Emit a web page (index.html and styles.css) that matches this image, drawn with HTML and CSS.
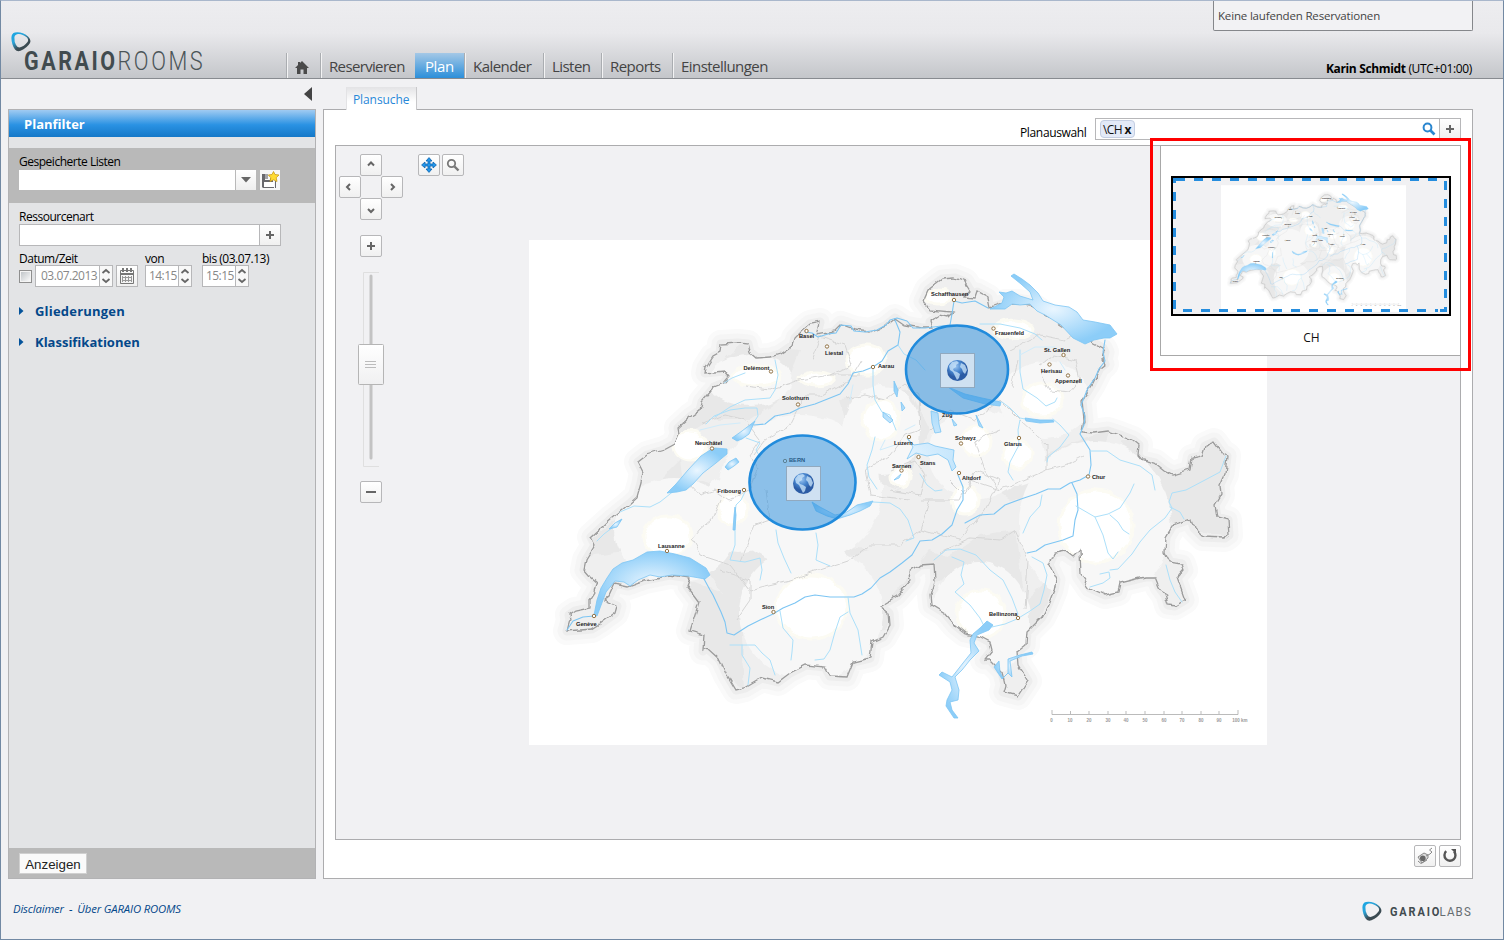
FILE: index.html
```
<!DOCTYPE html>
<html lang="de">
<head>
<meta charset="utf-8">
<title>GARAIO ROOMS – Plan</title>
<link rel="stylesheet" href="styles.css">
</head>
<body>
<div class="page">
  <header class="header">
    <svg class="logo" width="200" height="50" viewBox="10 28 200 50">
      <defs><linearGradient id="ring" x1="0" y1="0" x2="0.75" y2="1"><stop offset="0" stop-color="#18a8e6"/><stop offset=".4" stop-color="#2ba3d8"/><stop offset=".7" stop-color="#3c4d55"/><stop offset="1" stop-color="#39474c"/></linearGradient></defs>
      <path id="ringmark" fill="url(#ring)" fill-rule="evenodd" d="M15 32.500 Q11.500 33 11.400 38 Q11.600 45 15 49.500 Q17 52 20.500 50.800 Q27 48 30 43 Q31.500 40 28 36.500 Q22 31.500 15 32.500Z M18 34 Q22 33.500 27 37.500 Q29 40 27.500 42 Q24 46.500 19.500 47.500 Q17.500 47.500 16 45 Q14.200 42 14.400 37.500 Q14.500 34.500 18 34Z"/>
      <text class="logo-bold" transform="translate(24 70) scale(.86 1)" textLength="106">GARAIO</text>
      <text class="logo-thin" transform="translate(117.500 70) scale(.87 1)" textLength="98">ROOMS</text>
    </svg>
    <nav class="nav">
      <a class="nav-home"><svg width="16" height="15" viewBox="0 0 16 15"><path fill="#4a4a4a" d="M8 1 15 8H13V14H9.500V9.500H6.500V14H3V8H1L4 5V2H6V3Z"/></svg></a>
      <a class="nav-item w95">Reservieren</a>
      <a class="nav-item active">Plan</a>
      <a class="nav-item w79">Kalender</a>
      <a class="nav-item w58">Listen</a>
      <a class="nav-item w71">Reports</a>
      <a class="nav-item">Einstellungen</a>
    </nav>
    <div class="account">
      <div class="running">Keine laufenden Reservationen</div>
      <div class="user"><b>Karin Schmidt</b> <span>(UTC+01:00)</span></div>
    </div>
  </header>
  <main class="main">
    <section class="side">
      <div class="collapse"><svg width="8" height="14" viewBox="0 0 8 14"><path fill="#444" d="M8 0V14L0 7Z"/></svg></div>
      <div class="filter">
        <h2 class="filter-title">Planfilter</h2>
        <div class="saved">
          <label class="lbl saved-lbl">Gespeicherte Listen</label>
          <div class="row">
            <span class="select"></span><span class="drop"><svg width="10" height="6"><path fill="#666" d="M0 0H10L5 5.500Z"/></svg></span>
            <span class="save"><svg width="20" height="20" viewBox="0 0 20 20"><path fill="#68686c" d="M2 4H5V10H10V8L13 10V12H14V18H15V11H16V18H3L2 17Z"/><path fill="#fff" d="M4 12H14V17H4Z"/><path fill="#a4a4a8" d="M5 4H8V9H5Z"/><path fill="#ffdb32" stroke="#c99a19" stroke-width=".8" d="M13.500 1.500 15 4.500 19 5 16.200 7.700 17 11.500 13.500 9.800 10 11.500 10.800 7.700 8.300 5 12 4.500Z"/></svg></span>
          </div>
        </div>
        <div class="fields">
          <label class="lbl res-lbl">Ressourcenart</label>
          <div class="row"><span class="field res"></span><span class="btn plus-join"><svg width="10" height="10"><path fill="#666" d="M4 1H6V4H9V6H6V9H4V6H1V4H4Z"/></svg></span></div>
          <div class="dates">
            <div class="date-col">
              <label class="lbl date-lbl">Datum/Zeit</label>
              <div class="row"><span class="check"></span><span class="field date">03.07.2013</span><span class="spin"><svg width="10" height="18"><path class="chev" d="M1.500 6 5 3 8.500 6M1.500 12 5 15 8.500 12"/></svg></span>
              <span class="btn cal"><svg width="16" height="17" viewBox="0 0 16 17"><path fill="none" stroke="#777" d="M1.500 2.500H14.500V15.500H1.500Z"/><path fill="#777" d="M1 5H15V7H1ZM3 0H5V4H3ZM7 0H9V4H7ZM11 0H13V4H11Z"/><path stroke="#999" fill="none" d="M3 9.500H13M3 12.500H13M3.500 8V14M6.500 8V14M9.500 8V14M12.500 8V14"/></svg></span></div>
            </div>
            <div class="von-col"><label class="lbl date-lbl">von</label>
              <div class="row"><span class="field time">14:15</span><span class="spin"><svg width="10" height="18"><path class="chev" d="M1.500 6 5 3 8.500 6M1.500 12 5 15 8.500 12"/></svg></span></div></div>
            <div><label class="lbl date-lbl">bis (03.07.13)</label>
              <div class="row"><span class="field time">15:15</span><span class="spin"><svg width="10" height="18"><path class="chev" d="M1.500 6 5 3 8.500 6M1.500 12 5 15 8.500 12"/></svg></span></div></div>
          </div>
          <div class="group"><svg width="5" height="8"><path fill="#04539b" d="M0 0 4.500 4 0 8Z"/></svg><span class="g-wide">Gliederungen</span></div>
          <div class="group"><svg width="5" height="8"><path fill="#04539b" d="M0 0 4.500 4 0 8Z"/></svg><span>Klassifikationen</span></div>
        </div>
        <div class="actions"><span class="show">Anzeigen</span></div>
      </div>
    </section>
    <section class="content">
      <div class="tabs"><span class="tab">Plansuche</span></div>
      <div class="panel">
        <div class="search-row">
          <label class="lbl plan-lbl">Planauswahl</label>
          <div class="search"><span class="chip">\CH <b>x</b></span>
            <svg width="14" height="14" viewBox="0 0 14 14"><circle cx="5.500" cy="5.500" r="3.900" fill="none" stroke="#2a86cf" stroke-width="2"/><path d="M8.500 8.500 12.500 12.500" stroke="#2a86cf" stroke-width="2.600"/></svg></div>
          <span class="btn plus-search"><svg width="10" height="10"><path fill="#666" d="M4 1H6V4H9V6H6V9H4V6H1V4H4Z"/></svg></span>
        </div>
        <div class="viewport">
          <div class="controls">
            <div class="pad">
              <span class="btn up"><svg width="10" height="10"><path class="arrow" d="M2 5.500 5 2.500 8 5.500"/></svg></span>
              <span class="btn left"><svg width="10" height="10"><path class="arrow" d="M5 2 2 5 5 8"/></svg></span>
              <span class="btn right"><svg width="10" height="10"><path class="arrow" d="M4 2 7 5 4 8"/></svg></span>
              <span class="btn down"><svg width="10" height="10"><path class="arrow" d="M2 5 5 8 8 5"/></svg></span>
            </div>
            <span class="btn zoom-in"><svg width="10" height="10"><path fill="#666" d="M4 1H6V4H9V6H6V9H4V6H1V4H4Z"/></svg></span>
            <div class="slider"><svg width="28" height="196" viewBox="357 271 28 196"><defs><linearGradient id="knob" x1="0" y1="0" x2="0" y2="1"><stop offset="0" stop-color="#fff"/><stop offset="1" stop-color="#f0f0f1"/></linearGradient></defs><path fill="none" stroke="#dfdfdf" d="M379 272.500H363.500V466.500H379"/><path stroke="#c3c3c3" stroke-width="3" stroke-linecap="round" d="M371 276V458"/><rect x="358.500" y="344.500" width="25" height="40" rx="1" fill="url(#knob)" stroke="#b5b5b5"/><path stroke="#bcbcbc" d="M365 361.500H376M365 364.500H376M365 367.500H376"/></svg></div>
            <span class="btn zoom-out"><svg width="10" height="10"><path fill="#666" d="M0 4H10V6H0Z"/></svg></span>
          </div>
          <div class="tools">
            <span class="btn"><svg width="16" height="16" viewBox="0 0 16 16"><path fill="#2196ea" stroke="#0d63ae" stroke-width=".8" d="M8 .6 11 4H9V7H12V5L15.400 8 12 11V9H9V12H11L8 15.400 5 12H7V9H4V11L.6 8 4 5V7H7V4H5Z"/></svg></span>
            <span class="btn"><svg width="14" height="14" viewBox="0 0 14 14"><circle cx="5.500" cy="5.500" r="3.700" fill="none" stroke="#777" stroke-width="1.800"/><path d="M8.500 8.500 12.500 12.500" stroke="#777" stroke-width="2.400"/></svg></span>
          </div>
          <svg class="map" width="738" height="505" viewBox="529 240 738 505">
            <defs>
              <radialGradient id="lake"><stop offset="0" stop-color="#eaf6ff"/><stop offset="1" stop-color="#8ccdf8"/></radialGradient>
              <radialGradient id="globe" cx=".4" cy=".3"><stop offset="0" stop-color="#9dc7f2"/><stop offset=".6" stop-color="#4583cc"/><stop offset="1" stop-color="#2c5ca5"/></radialGradient>
              <filter id="rough" x="-5%" y="-5%" width="110%" height="110%" color-interpolation-filters="sRGB"><feTurbulence type="fractalNoise" baseFrequency=".12" numOctaves="1" seed="4"/><feDisplacementMap in="SourceGraphic" scale="7" xChannelSelector="R" yChannelSelector="G"/></filter>
              <path id="border" d="M567 631 570 620 569 615 575 611 590 608 590 600 595 592 597 583 590 577 584 570 586 560 595 545 591 537 612 518 628 505 637 497 641 483 643 472 638 462 647 455 664 450 675 444 679 434 678 428 690 417 700 410 702 402 713 389 714 387 724 383 729 377 724 371 705 373 706 368 713 357 720 353 721 344 738 343 748 344 750 352 757 358 770 357 780 354 793 345 795 338 803 330 810 324 820 322 817 335 834 332 841 325 855 330 870 332 885 326 895 318 905 325 922 328 932 328 930 322 940 315 948 317 953 312 930 310 923 301 928 290 938 282 942 279 955 278 965 282 970 290 964 297 975 298 977 292 988 298 990 308 1005 303 1018 303 1030 305 1045 315 1075 335 1090 341 1103 348 1105 352 1103 360 1105 364 1100 368 1092 384 1082 400 1084 420 1082 432 1093 433 1108 431 1120 435 1133 440 1139 445 1138 455 1142 460 1155 463 1165 471 1173 475 1190 470 1192 458 1202 456 1205 446 1214 442 1222 453 1227 456 1225 474 1220 485 1221 495 1215 505 1217 517 1228 520 1229 535 1225 538 1203 537 1194 528 1191 519 1173 525 1166 537 1165 552 1170 562 1182 564 1184 570 1177 578 1185 600 1175 606 1168 605 1165 595 1159 587 1155 577 1145 577 1120 583 1118 592 1105 595 1090 588 1081 575 1080 550 1073 557 1065 551 1054 553 1049 565 1056 580 1054 590 1048 605 1042 617 1027 632 1026 645 1017 652 1018 665 1025 676 1028 681 1018 696 1003 692 1005 685 1002 672 990 660 984 660 992 650 990 642 979 636 965 633 955 625 945 613 932 605 931 595 935 582 934 564 920 565 910 573 911 580 897 596 880 606 889 613 890 625 883 637 872 642 870 658 853 662 847 677 830 676 825 667 806 665 790 673 778 682 762 678 745 688 736 690 727 675 720 660 707 648 703 651 704 635 690 631 695 615 699 602 687 586 690 578 670 575 645 580 628 586 615 583 609 596 604 600 617 606 615 613 600 624 592 629Z"/>
              <clipPath id="land"><use href="#border"/></clipPath>
            </defs>
            <g id="swiss">
              <rect x="529" y="240" width="738" height="505" fill="#fff"/>
              <g fill="none" stroke-linejoin="round"><use href="#border" stroke="#fafafa" stroke-width="28"/><use href="#border" stroke="#f5f5f5" stroke-width="19"/><use href="#border" stroke="#ededed" stroke-width="9"/></g>
              <g filter="url(#rough)">
                <use href="#border" fill="#efefef"/>
                <g clip-path="url(#land)">
                  <g fill="#e8e8e8"><path d="M700 380 740 345 800 350 780 400 750 420 710 420 670 445ZM700 480 760 500 790 560 840 545 870 550 800 575 760 590 740 620 700 560ZM840 400 910 390 930 430 900 490 860 480ZM1120 440 1240 440 1240 540 1175 525ZM1080 440 1110 430 1090 490 1010 500 980 480ZM935 565 980 535 1015 530 1025 600 1060 570 1030 640 1000 650Z"/><path d="M565 560 640 500 680 460 685 500 640 550ZM690 580 740 600 745 690 690 650ZM830 670 890 600 930 550 960 560 920 600Z"/></g>
                  <g fill="#f7f7f7"><ellipse cx="811" cy="613" rx="72" ry="67"/><ellipse cx="1095" cy="523" rx="76" ry="82"/><ellipse cx="980" cy="620" rx="50" ry="58"/><ellipse cx="675" cy="530" rx="61" ry="52"/><ellipse cx="738" cy="513" rx="39" ry="40"/><ellipse cx="800" cy="490" rx="82" ry="75"/><ellipse cx="882" cy="430" rx="39" ry="45"/><ellipse cx="750" cy="380" rx="42" ry="26"/><ellipse cx="978" cy="454" rx="50" ry="45"/><ellipse cx="1045" cy="400" rx="46" ry="38"/><ellipse cx="1017" cy="456" rx="28" ry="30"/></g>
                  <g fill="#fff" stroke="#fcfbf3" stroke-width="3"><ellipse cx="812" cy="607" rx="36" ry="32"/><ellipse cx="1096" cy="526" rx="37" ry="36"/><ellipse cx="981" cy="614" rx="24" ry="24"/><ellipse cx="668" cy="536" rx="24" ry="20"/><ellipse cx="733" cy="509" rx="15" ry="15"/><ellipse cx="1042" cy="400" rx="20" ry="17"/><ellipse cx="881" cy="420" rx="18" ry="20"/><ellipse cx="976" cy="441" rx="15" ry="15"/><ellipse cx="1017" cy="454" rx="15" ry="14"/><ellipse cx="756" cy="376" rx="24" ry="10"/><ellipse cx="690" cy="446" rx="17" ry="15"/><ellipse cx="866" cy="360" rx="20" ry="15"/><ellipse cx="900" cy="477" rx="10" ry="10"/><ellipse cx="965" cy="500" rx="14" ry="14"/><ellipse cx="817" cy="379" rx="17" ry="7"/><ellipse cx="938" cy="297" rx="13" ry="7"/><ellipse cx="1014" cy="329" rx="19" ry="9"/></g>
                  <g fill="none" stroke="#d5d5d5" stroke-width="1"><path d="M702 424 725 415 745 420 760 440 750 455 758 470 750 490 730 500 715 490 700 495 690 484M754 455 765 440 790 425 805 395 822 395 850 380 862 360M745 387 770 390 800 380 830 375 860 375M812 360 820 337 845 345 852 365 830 375M846 399 865 395 885 400 905 385 918 395 920 430 905 435 890 455 865 470 870 495 910 500M692 540 700 530 712 520 720 500M692 540 700 555 730 565 750 590 760 587 790 580 820 570 850 560 870 545 900 545 920 530 930 500M930 430 950 410 975 420 1000 400 1020 420 1047 445 1047 470 1000 490 970 480 960 500 920 500M1000 490 985 470 975 440 1000 430M1047 470 1065 465 1085 455M940 552 970 538 1000 540 1015 530 1028 560 1025 610M950 480 965 495 975 470 1000 480 985 510 960 540 920 530M740 562 755 525 770 520 766 490M1010 350 1040 335 1065 340 1075 335M1040 365 1055 355 1075 360 1080 380 1070 392 1050 390 1040 370M1011 388 1018 360M890 470 915 460 925 475 920 495 890 490M736 620 750 600 750 580 720 570"/></g>
                </g>
                <use href="#border" fill="none" stroke="#9b9b9b" stroke-width="1.300"/>
              </g>
              <g fill="none" stroke-linejoin="round" stroke-linecap="round">
                <g stroke="#7cc5f3" stroke-width="1.100"><path d="M805 332 812 333 818 337 828 334 836 333 841 325 851 326 854 331 865 332 877 330 886 325 890 320 897 318 907 321 913 328 925 328 950 325 952 314 954 301M954 301 962 303 975 301 988 308M1105 340 1103 352 1105 361 1099 369 1095 378 1088 388 1081 405 1085 416 1084 425 1080 434 1090 450 1091 465 1089 475 1080 480 1070 483 1060 489 1048 489 1036 494 1024 498 1005 505 994 514 980 515 965 523M1072 483 1077 494 1078 510 1075 520 1073 536 1063 540 1045 545 1036 551 1027 553M703 577 710 590 713 595 721 612 725 622 727 633 734 635 748 626 760 620 773 614 783 608 795 603 805 597 815 595 830 597 854 597 862 594 871 588 880 578 890 572 902 563 912 555 920 541 932 540 942 534 952 525 957 510 963 500 963 487 958 475M754 425 765 424 775 416 790 413 800 408 815 404 830 398 840 394 848 384 853 373 863 371 873 367 882 361 888 351 898 345 900 332 895 320M567 630 573 621 583 617 594 616"/></g>
                <g stroke="#ace0fa" stroke-width="1"><path d="M620 512 634 506 650 507 660 502 675 490M597 541 604 534 612 528M724 383 732 378 745 373M775 360 778 375 775 390 770 398 745 400 730 407 715 417M706 424 714 416 730 410 745 408 757 408 758 416 754 422M746 438 760 443 756 450 760 457M745 492 741 500 736 505 735 515 735 530 735 545 730 560 745 562 760 558 762 570 760 580M776 530 778 543 784 558 791 573M816 533 818 545 816 560 830 566M873 502 890 503 900 509 908 520 914 538 906 541M848 597 850 613 858 630 862 655M848 612 840 617 835 632 830 650 824 659 815 660M780 611 783 628 793 640 792 652 791 660M730 645 755 645 762 653 770 660 775 675M742 645 742 655 750 668 748 685M873 367 873 385 875 400 882 412 890 415 896 430M898 345 904 354 916 360 925 370M934 560 946 550 960 549 976 555 990 570 1003 580 1012 598 1018 614M952 557 964 562 961 575 964 584 955 592 970 605 980 618 985 628M992 627 1005 624 1017 619 1030 611 1040 604 1044 590 1047 575 1043 563 1032 557M1002 402 1010 408 1020 418 1030 420M1053 419 1060 425 1069 435 1060 447 1048 457 1047 462M1020 420 1018 430 1019 445 1010 462 1008 472 1013 480M1020 350 1020 372 1023 389 1037 398 1046 406 1055 402 1057 398M980 324 1000 324 1020 328 1035 334 1042 340M1090 451 1107 451 1120 460 1140 466 1152 475 1155 490M1076 506 1095 517 1108 514 1120 508 1130 493 1134 484M1095 517 1103 535 1108 553 1113 559 1118 552M1110 515 1118 522 1123 530 1129 534M1226 456 1220 472 1205 480 1186 490 1172 493 1169 502 1172 508 1165 518 1150 530 1140 542 1132 554 1118 569 1110 570M1090 587 1103 583 1110 578 1109 572 1100 574M1170 507 1180 512 1184 519M1166 565 1170 580 1175 592 1182 602M1042 495 1040 506 1030 517 1023 533M875 437 872 450 867 465 869 477 877 489M920 474 927 485 935 491 942 490"/></g>
                <path stroke="#d0ecfb" d="M700 430 720 425 740 423M850 400 853 385M905 430 915 425M1020 355 1035 347 1055 347M1060 362 1065 370M885 440 880 450 895 445"/>
              </g>
              <g fill="url(#lake)" stroke="#7cc5f4" stroke-width=".8" stroke-linejoin="round"><path d="M594 615 597 600 601 588 607 578 613 569 622 563 633 560 647 552 660 551 675 554 690 558 706 568 710 575 705 579 688 576 672 575 660 577 650 575 638 580 630 586 624 582 615 581 606 592 597 616Z"/><path d="M667 493 676 484 688 470 701 456 710 450 715 448 727 449 727 454 716 463 703 473 693 484 686 490 677 492Z"/><path d="M732 438 742 431 755 421 749 434 742 439 737 441Z"/><path d="M725 467 729 462 736 458 739 462 734 466 728 470Z"/><path d="M1011 276 1014 274 1022 279 1030 285 1038 293 1043 301 1055 305 1069 307 1077 312 1083 320 1095 322 1110 325 1117 334 1110 338 1104 338 1094 340 1085 344 1073 338 1061 325 1045 315 1037 311 1030 304 1020 305 1012 304 1005 309 990 309 1002 303 1004 297 999 292 1006 293 1012 291 1020 296 1033 300 1030 292 1021 284Z"/><path d="M812 502 820 507 835 515 845 513 850 510 857 505 873 501 870 506 860 511 850 515 837 519 827 516 816 511Z"/><path d="M931 411 938 413 939 424 941 432 935 433 932 423ZM907 438 914 445 928 443 935 446 949 449 954 450 953 460 956 467 952 471 948 460 938 454 927 456 916 453 907 459 913 447ZM948 387 965 394 982 398 1001 402 1000 406 985 404 963 398ZM1025 418 1040 420 1053 420 1054 422 1040 423 1026 421ZM883 412 893 420 890 423 883 417ZM894 381 898 390 897 397 894 391ZM901 402 905 408 902 411ZM976 415 983 428 979 426ZM952 419 957 425 954 426ZM894 480 901 474 899 478ZM735 507 736 515 735 530 733 530 734 516Z"/><path d="M980 628 987 621 993 625 989 630 977 635 974 643 979 651 970 660 962 670 955 677 959 690 958 700 950 702 952 710 958 718 954 718 946 706 947 700 952 690 950 682 939 675 942 672 952 677 963 663 971 653 970 640 973 634Z"/><path d="M999 661 1000 672 1003 678 1008 673 1008 659 1020 655 1032 652 1033 654 1022 656 1010 661 1012 677 1008 673 1002 679 994 667Z"/><path d="M609 529 615 523 622 519 617 527Z"/></g>
              <g fill="#fff" stroke="#927448" stroke-width="1"><circle cx="954" cy="300" r="1.700"/><circle cx="806.500" cy="331" r="1.700"/><circle cx="827" cy="346.500" r="1.700"/><circle cx="873" cy="367" r="1.700"/><circle cx="993.500" cy="328.500" r="1.700"/><circle cx="1063.500" cy="355" r="1.700"/><circle cx="1049.500" cy="364.500" r="1.700"/><circle cx="1068" cy="375.500" r="1.700"/><circle cx="771" cy="371.500" r="1.700"/><circle cx="798" cy="404.500" r="1.700"/><circle cx="712" cy="448.500" r="1.700"/><circle cx="744" cy="490" r="1.700"/><circle cx="785" cy="461" r="1.700"/><circle cx="909" cy="437" r="1.700"/><circle cx="961" cy="443.500" r="1.700"/><circle cx="1019" cy="438" r="1.700"/><circle cx="901.500" cy="470.500" r="1.700"/><circle cx="918.500" cy="457" r="1.700"/><circle cx="959" cy="473" r="1.700"/><circle cx="1088" cy="476.500" r="1.700"/><circle cx="667" cy="551" r="1.700"/><circle cx="594" cy="616" r="1.700"/><circle cx="773.500" cy="612" r="1.700"/><circle cx="1018" cy="618" r="1.700"/></g>
              <g class="city"><text x="931" y="295.500">Schaffhausen</text><text x="799" y="337.500">Basel</text><text x="825" y="354.500">Liestal</text><text x="878" y="368">Aarau</text><text x="995" y="335">Frauenfeld</text><text x="1044" y="351.500">St. Gallen</text><text x="1041" y="372.500">Herisau</text><text x="1055" y="382.500">Appenzell</text><text x="743.500" y="370">Delémont</text><text x="782" y="399.500">Solothurn</text><text x="695" y="444.500">Neuchâtel</text><text x="717.500" y="492.500">Fribourg</text><text x="789" y="461.500">BERN</text><text x="894" y="444.500">Luzern</text><text x="955" y="440">Schwyz</text><text x="1004" y="445.500">Glarus</text><text x="892" y="467.500">Sarnen</text><text x="920" y="464.500">Stans</text><text x="962" y="480">Altdorf</text><text x="1092" y="479">Chur</text><text x="658" y="548">Lausanne</text><text x="576" y="626">Genève</text><text x="762" y="608.500">Sion</text><text x="989" y="615.500">Bellinzona</text><text x="942" y="416.500">Zug</text></g>
              <path fill="none" stroke="#aaa" stroke-width=".8" d="M1052 710V714.500H1238V710M1070.500 711V714M1089 711V714M1108 711V714M1126 711V714M1145 711V714M1164 711V714M1182 711V714M1201 711V714M1219 711V714"/>
              <g class="scale"><text x="1051.500" y="722">0</text><text x="1070" y="722">10</text><text x="1089" y="722">20</text><text x="1108" y="722">30</text><text x="1126" y="722">40</text><text x="1145" y="722">50</text><text x="1164" y="722">60</text><text x="1182" y="722">70</text><text x="1201" y="722">80</text><text x="1219" y="722">90</text><text x="1240" y="722">100 km</text></g>
            </g>
            <g fill="#2a8ddd" fill-opacity=".52" stroke="#218bdc" stroke-width="2.600"><ellipse cx="957" cy="369.500" rx="51" ry="44"/><ellipse cx="802.500" cy="482.500" rx="53" ry="47"/></g>
            <g id="pin"><rect x="940.500" y="353.500" width="34" height="34" fill="#d5e4f2" fill-opacity=".92" stroke="#91a9bf"/><circle cx="957.500" cy="370.500" r="10.500" fill="url(#globe)"/><path fill="#c6e1f8" opacity=".8" d="M949 366 952 362 957 361 959 363 956 365 956 367 953 369 954 371 957 372 960 374 959 378 957 380 955 376 953 372 950 370ZM961 363 965 365 967 370 965 374 963 372 962 369 960 367Z"/></g>
            <use href="#pin" x="-154" y="113"/>
          </svg>
        </div>
        <div class="panel-foot">
          <span class="btn"><svg width="18" height="18" viewBox="0 0 18 18"><path fill="#ddd" stroke="#888" d="M2 10 8 6 12 8 12 11 6 16Z"/><circle cx="6.800" cy="11.300" r="2.800" fill="#666"/><path fill="none" stroke="#888" d="M10 9 14 7 16 5 13.500 3 16 1M2 14 5 16.500 11 13"/></svg></span>
          <span class="btn"><svg width="16" height="16" viewBox="0 0 16 16"><path fill="none" stroke="#555" stroke-width="2.400" d="M4.200 3.200A5.500 5.500 0 1 0 12 3.500"/><path fill="#555" d="M9 1H14V6Z"/></svg></span>
        </div>
      </div>
    </section>
  </main>
  <footer class="footer"><div class="links"><a>Disclaimer</a><span>-</span><a>Über GARAIO ROOMS</a></div>
    <svg class="labs" width="114" height="24" viewBox="1361 899 114 24"><use href="#ringmark" x="1352" y="869.500"/><text class="lab-bold" transform="translate(1391 916) scale(.88 1)" textLength="56">GARAIO</text><text class="lab-thin" transform="translate(1440.500 916) scale(.92 1)" textLength="34">LABS</text></svg>
  </footer>
  <div class="preview">
    <div class="thumb"><svg width="276" height="136" viewBox="1173 178 276 136"><svg x="1221" y="185" width="185" height="127" viewBox="529 240 738 505"><use href="#swiss"/></svg><path fill="none" stroke="#258dde" stroke-width="3" stroke-dasharray="9 9" d="M1176 179.500H1446M1183 310.500H1438"/><path fill="none" stroke="#258dde" stroke-width="3" stroke-dasharray="9 9" d="M1174.500 192V312M1445.500 181V312"/><path fill="none" stroke="#258dde" stroke-width="3" d="M1174.500 183V179.500H1179M1440 310.500H1447"/></svg></div>
    <span class="thumb-name">CH</span>
  </div>
  <div class="highlight"></div>
</div>
</body>
</html>
```
FILE: styles.css
```
* { box-sizing: border-box; }
body { margin: 0; background: #f1f1f3; font: 12px/16px "Open Sans", "Noto Sans", sans-serif; color: #111; }
svg { display: block; flex: none; }
.page { position: relative; width: 1504px; height: 940px; border: 1px solid #7289a3; border-top-color: #a9b7cc; overflow: hidden; display: flex; flex-direction: column; }
.header { height: 78px; flex: none; display: flex; align-items: flex-end; background: linear-gradient(#ededf0 0, #e9e9ec 32px, #c4c6ca 77px); border-bottom: 1px solid #888b90; }
.logo { margin: 0 76px 0 9px; overflow: visible; }
.labs { overflow: visible; margin: -1px -2px 0 0; }
.logo-bold, .lab-bold { font: 700 25px Roboto, sans-serif; fill: #414b4f; }
.logo-thin, .lab-thin { font: 300 25px Roboto, sans-serif; fill: #4b5558; }
.lab-bold { font-size: 12.500px; }
.lab-thin { font-size: 12.500px; font-weight: 400; fill: #666d71; }
.nav { display: flex; height: 25px; }
.nav-home { width: 34px; padding: 7px 0 0 7px; border-left: 1px solid #aaadb1; box-shadow: inset 1px 0 #f3f3f4; }
.nav-item { font-size: 15px; line-height: 26px; letter-spacing: -.55px; color: #444; padding-left: 8px; border-left: 1px solid #aaadb1; box-shadow: inset 1px 0 #f3f3f4; white-space: nowrap; }
.nav-item.active { width: 49px; color: #fff; background: linear-gradient(#a4c8e6, #2c8fda); border: 0; box-shadow: none; padding-left: 10px; letter-spacing: -.4px; }
.w95 { width: 95px; letter-spacing: -.65px; } .w79 { width: 79px; } .w58 { width: 58px; } .w71 { width: 71px; }
.account { margin-left: auto; margin-right: 30px; height: 77px; width: 260px; display: flex; flex-direction: column; justify-content: space-between; }
.running { height: 30px; border: 1px solid #85878b; border-top: 0; border-radius: 0 0 2px 2px; background: #f2f2f4; padding: 7px 4px; font-size: 11.500px; letter-spacing: -.17px; color: #444; white-space: nowrap; }
.user { text-align: right; font-size: 12px; letter-spacing: -.35px; padding: 0 1px 1px 0; white-space: nowrap; color: #000; }
.main { display: flex; flex: none; height: 800px; padding: 0 30px 0 7px; gap: 7px; }
.side { width: 308px; }
.collapse { height: 30px; padding: 8px 4px 0; display: flex; justify-content: flex-end; }
.filter { height: 770px; border: 1px solid #b2b2b4; background: #e3e4e6; display: flex; flex-direction: column; }
.filter-title { margin: 0 0 11px; height: 27px; flex: none; padding-left: 15px; color: #fff; font-size: 13px; line-height: 29px; background: linear-gradient(#a0cbf2, #2a92e3 55%, #1478c8); }
.saved { height: 55px; flex: none; background: #b9b9b9; padding: 6px 10px 0; }
.row { display: flex; align-items: center; }
.lbl { display: block; font-size: 12px; letter-spacing: -.48px; white-space: nowrap; color: #000; }
.res-lbl { height: 15px; }
.select { width: 216px; height: 20px; background: #fff; }
.drop { width: 20px; height: 20px; margin: 0 4px 0 1px; background: linear-gradient(#fff, #eee); display: grid; place-items: center; }
.save { width: 20px; height: 20px; background: #f7f7f7; }
.fields { flex: 1; padding: 6px 10px; }
.field { height: 22px; background: #fff; border: 1px solid #b7b7b9; color: #888; letter-spacing: -.3px; line-height: 20px; padding-left: 5px; overflow: hidden; white-space: nowrap; }
.res { width: 241px; }
.btn { width: 22px; height: 22px; flex: none; display: grid; place-items: center; border: 1px solid #b7b7b9; border-radius: 2px; background: linear-gradient(#fff, #f0f0f0); }
.plus-join { margin-left: -1px; border-radius: 0; }
.dates { display: flex; margin-top: 4px; }
.date-lbl { height: 15px; line-height: 17px; }
.date-col { width: 126px; } .von-col { width: 57px; }
.check { width: 13px; height: 13px; border: 1px solid #8f8f8f; background: linear-gradient(135deg, #bbc0c4, #fff); box-shadow: inset 0 0 0 1px #f4f4f4; margin-right: 3px; flex: none; }
.date { width: 65px; letter-spacing: -.5px; } .time { width: 34px; padding-left: 3px; letter-spacing: -.55px; }
.spin { width: 13px; height: 22px; border: 1px solid #b7b7b9; border-left: 0; background: #f8f8f8; display: grid; place-items: center; flex: none; }
.chev { fill: none; stroke: #666; stroke-width: 1.800; }
.arrow { fill: none; stroke: #666; stroke-width: 2; }
.cal { margin-left: 3px; border-radius: 0; }
.group { display: flex; align-items: center; gap: 11px; height: 16px; margin-top: 15px; font-weight: 700; font-size: 13px; letter-spacing: 0; color: #04488a; }
.dates + .group { margin-top: 16px; }
.g-wide { letter-spacing: .2px; }
.actions { height: 30px; flex: none; background: #b9b9b9; padding: 5px 10px; display: flex; }
.show { width: 68px; height: 21px; background: #fafafa; border: 1px solid #d0d0d0; font: 13.333px/21px "Liberation Sans", sans-serif; text-align: center; color: #222; }
.content { width: 1150px; }
.tabs { height: 31px; padding: 8px 0 0 23px; display: flex; margin-bottom: -1px; position: relative; }
.tab { width: 71px; height: 23px; padding-left: 6px; color: #2788d8; background: linear-gradient(#e3e3e5, #fff 65%); border-right: 1px solid #c8c8ca; border-left: 1px solid #e3e3e5; line-height: 25px; letter-spacing: -.1px; }
.panel { height: 770px; border: 1px solid #acacae; background: #fff; padding: 8px 11px; }
.search-row { display: flex; height: 22px; }
.plan-lbl { width: 75px; margin-left: auto; padding-top: 7px; letter-spacing: -.35px; }
.search { width: 345px; height: 22px; border: 1px solid #b7b7b9; display: flex; justify-content: space-between; align-items: center; padding: 0 3px 0 4px; }
.chip { height: 18px; width: 35px; background: #e3eaf8; border: 1px solid #c4cee2; border-radius: 4px; line-height: 17px; padding-left: 2px; letter-spacing: -.6px; white-space: nowrap; }
.plus-search { margin-left: -1px; border-radius: 0; }
.viewport { margin-top: 5px; height: 695px; border: 1px solid #acacae; background: #f1f1f3; display: flex; align-items: flex-start; overflow: hidden; }
.controls { width: 67px; padding: 8px 0 0 3px; margin-right: 15px; }
.pad { display: grid; grid-template: repeat(3, 22px) / repeat(3, 21px); }
.up { grid-area: 1 / 2; } .left { grid-area: 2 / 1; } .right { grid-area: 2 / 3; } .down { grid-area: 3 / 2; }
.zoom-in, .zoom-out { margin-left: 21px; }
.zoom-in { margin-top: 15px; }
.slider { margin: 14px 0 14px 18px; }
.tools { display: flex; gap: 2px; padding-top: 8px; width: 47px; }
.map { margin: 94px 0 0 64px; }
.city { font: 700 5.700px "Liberation Sans", sans-serif; fill: #222; }
.scale { font: 700 4.500px "Liberation Sans", sans-serif; fill: #999; text-anchor: middle; }
.panel-foot { display: flex; justify-content: flex-end; gap: 3px; padding-top: 5px; }
.footer { display: flex; justify-content: space-between; padding: 21px 31px 0 12px; }
.links { display: flex; gap: 5px; padding-top: 1px; font-size: 11.300px; font-style: italic; letter-spacing: -.15px; color: #04488a; }
.preview { position: absolute; left: 1159px; top: 144px; width: 301px; height: 211px; border: 1px solid #a8a8a8; background: #fff; padding: 30px 0 0 10px; }
.thumb { width: 280px; height: 140px; border: 2px solid #000; background: #f1f1f3; overflow: hidden; }
.thumb-name { display: block; margin-top: 14px; width: 281px; text-align: center; }
.highlight { position: absolute; left: 1149px; top: 137px; width: 321px; height: 233px; border: 3px solid #f00; }
```
